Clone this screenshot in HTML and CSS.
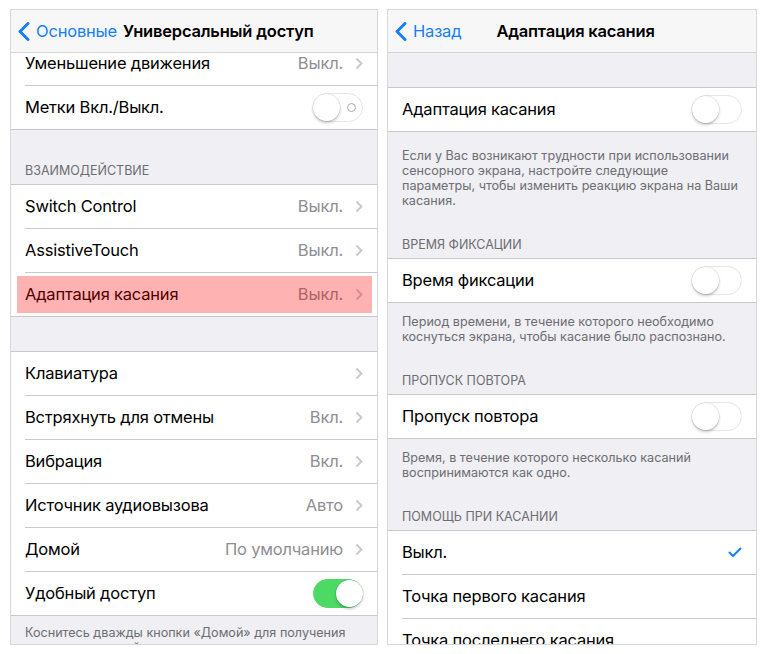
FILE: index.html
```html
<!DOCTYPE html>
<html lang="ru">
<head>
<meta charset="utf-8">
<title>Универсальный доступ</title>
<link rel="stylesheet" href="styles.css">
</head>
<body>
<div class="page">
  <section class="phone phone-left">
    <header class="nav nav-inline">
      <span class="back"><svg class="back-chev" viewBox="0 0 12 19"><path d="M10 1.5 L2 9.5 L10 17.5"/></svg>Основные</span>
      <span class="nav-title">Универсальный доступ</span>
    </header>
    <div class="screen">
      <div class="content scrolled">
        <div class="group">
          <div class="row"><div class="row-inner"><span class="label">Уменьшение движения</span><span class="value">Выкл.</span><svg class="chev" viewBox="0 0 8 13"><path d="M1.5 1.5 L6.5 6.5 L1.5 11.5"/></svg></div></div>
          <div class="row"><div class="row-inner"><span class="label">Метки Вкл./Выкл.</span><span class="toggle"><span class="knob"></span><span class="o-label"></span></span></div></div>
        </div>
        <div class="sec-header sec-header-tall">ВЗАИМОДЕЙСТВИЕ</div>
        <div class="group">
          <div class="row"><div class="row-inner"><span class="label">Switch Control</span><span class="value">Выкл.</span><svg class="chev" viewBox="0 0 8 13"><path d="M1.5 1.5 L6.5 6.5 L1.5 11.5"/></svg></div></div>
          <div class="row"><div class="row-inner"><span class="label">AssistiveTouch</span><span class="value">Выкл.</span><svg class="chev" viewBox="0 0 8 13"><path d="M1.5 1.5 L6.5 6.5 L1.5 11.5"/></svg></div></div>
          <div class="row highlight"><div class="row-inner"><span class="label">Адаптация касания</span><span class="value">Выкл.</span><svg class="chev" viewBox="0 0 8 13"><path d="M1.5 1.5 L6.5 6.5 L1.5 11.5"/></svg></div></div>
        </div>
        <div class="spacer"></div>
        <div class="group">
          <div class="row"><div class="row-inner"><span class="label">Клавиатура</span><svg class="chev" viewBox="0 0 8 13"><path d="M1.5 1.5 L6.5 6.5 L1.5 11.5"/></svg></div></div>
          <div class="row"><div class="row-inner"><span class="label">Встряхнуть для отмены</span><span class="value">Вкл.</span><svg class="chev" viewBox="0 0 8 13"><path d="M1.5 1.5 L6.5 6.5 L1.5 11.5"/></svg></div></div>
          <div class="row"><div class="row-inner"><span class="label">Вибрация</span><span class="value">Вкл.</span><svg class="chev" viewBox="0 0 8 13"><path d="M1.5 1.5 L6.5 6.5 L1.5 11.5"/></svg></div></div>
          <div class="row"><div class="row-inner"><span class="label">Источник аудиовызова</span><span class="value">Авто</span><svg class="chev" viewBox="0 0 8 13"><path d="M1.5 1.5 L6.5 6.5 L1.5 11.5"/></svg></div></div>
          <div class="row"><div class="row-inner"><span class="label">Домой</span><span class="value">По умолчанию</span><svg class="chev" viewBox="0 0 8 13"><path d="M1.5 1.5 L6.5 6.5 L1.5 11.5"/></svg></div></div>
          <div class="row"><div class="row-inner"><span class="label">Удобный доступ</span><span class="toggle on"><span class="knob"></span></span></div></div>
        </div>
        <p class="footer footer-left">Коснитесь дважды кнопки «Домой» для получения доступа к верхней части экрана.</p>
      </div>
    </div>
  </section>

  <section class="phone phone-right">
    <header class="nav nav-centered">
      <span class="back"><svg class="back-chev" viewBox="0 0 12 19"><path d="M10 1.5 L2 9.5 L10 17.5"/></svg>Назад</span>
      <span class="nav-title">Адаптация касания</span>
      <span></span>
    </header>
    <div class="screen">
      <div class="content">
        <div class="spacer"></div>
        <div class="group">
          <div class="row"><div class="row-inner"><span class="label">Адаптация касания</span><span class="toggle"><span class="knob"></span></span></div></div>
        </div>
        <p class="footer footer-first">Если у Вас возникают трудности при использовании сенсорного экрана, настройте следующие параметры, чтобы изменить реакцию экрана на Ваши касания.</p>
        <div class="sec-header">ВРЕМЯ ФИКСАЦИИ</div>
        <div class="group">
          <div class="row"><div class="row-inner"><span class="label">Время фиксации</span><span class="toggle"><span class="knob"></span></span></div></div>
        </div>
        <p class="footer">Период времени, в течение которого необходимо коснуться экрана, чтобы касание было распознано.</p>
        <div class="sec-header">ПРОПУСК ПОВТОРА</div>
        <div class="group">
          <div class="row"><div class="row-inner"><span class="label">Пропуск повтора</span><span class="toggle"><span class="knob"></span></span></div></div>
        </div>
        <p class="footer">Время, в течение которого несколько касаний воспринимаются как одно.</p>
        <div class="sec-header">ПОМОЩЬ ПРИ КАСАНИИ</div>
        <div class="group">
          <div class="row"><div class="row-inner"><span class="label">Выкл.</span><svg class="check" viewBox="0 0 14 11"><path d="M1.5 5.5 L5 9 L12.5 1.5"/></svg></div></div>
          <div class="row"><div class="row-inner"><span class="label">Точка первого касания</span></div></div>
          <div class="row"><div class="row-inner"><span class="label">Точка последнего касания</span></div></div>
        </div>
      </div>
    </div>
  </section>
</div>
</body>
</html>
```

FILE: styles.css
```css
* {
  box-sizing: border-box;
  margin: 0;
  padding: 0;
}

body {
  background: #ffffff;
  font-family: Inter, "Noto Sans", sans-serif;
  color: #000;
}

.page {
  display: flex;
  gap: 9px;
  padding: 9px 0 0 10px;
}

.phone {
  height: 636px;
  border: 1px solid #d7d7db;
  background: #efeff4;
  display: flex;
  flex-direction: column;
  overflow: hidden;
}

.phone-left {
  width: 368px;
}

.phone-right {
  width: 370px;
}

.nav {
  flex: none;
  height: 43px;
  background: #f7f7f8;
  border-bottom: 1px solid #d4d4d8;
  padding-left: 7px;
  font-size: 16.5px;
  letter-spacing: -0.2px;
}

.nav-inline {
  display: flex;
  align-items: center;
  gap: 6px;
}

.nav-centered {
  display: grid;
  grid-template-columns: 1fr auto 1fr;
  align-items: center;
}

.back {
  display: flex;
  align-items: center;
  color: #147efb;
  white-space: nowrap;
}

.back-chev {
  width: 12px;
  height: 19px;
  margin-right: 6px;
  fill: none;
  stroke: #147efb;
  stroke-width: 3;
  stroke-linecap: round;
  stroke-linejoin: round;
}

.nav-title {
  font-weight: 600;
  white-space: nowrap;
}

.screen {
  flex: 1;
  overflow: hidden;
}

.scrolled {
  margin-top: -12px;
}

.group {
  background: #fff;
  border-top: 1px solid #c8c7cc;
  border-bottom: 1px solid #c8c7cc;
}

.row {
  padding-left: 14px;
  font-size: 16.5px;
  letter-spacing: -0.2px;
}

.row-inner {
  height: 44px;
  border-bottom: 1px solid #c8c7cc;
  display: flex;
  align-items: center;
  padding-right: 14px;
}

.row:last-child .row-inner {
  height: 43px;
  border-bottom: 0;
}

.label {
  flex: 1;
  white-space: nowrap;
  margin-top: -1px;
}

.value {
  color: #8e8e93;
  margin-right: 12px;
  white-space: nowrap;
  margin-top: -1px;
}

.chev {
  width: 8px;
  height: 13px;
  fill: none;
  stroke: #c7c7cc;
  stroke-width: 1.8;
}

.check {
  width: 14px;
  height: 11px;
  fill: none;
  stroke: #147efb;
  stroke-width: 2;
  stroke-linecap: round;
  stroke-linejoin: round;
}

.highlight {
  position: relative;
}

.highlight::after {
  content: "";
  position: absolute;
  top: 3px;
  bottom: 3px;
  left: 6px;
  right: 5px;
  background: rgba(255, 0, 0, 0.3);
}

.toggle {
  flex: none;
  width: 50px;
  height: 29px;
  border-radius: 15px;
  border: 1.5px solid #e5e5ea;
  background: #fff;
  display: flex;
  align-items: center;
  justify-content: space-between;
}

.knob {
  width: 27px;
  height: 27px;
  border-radius: 50%;
  background: #fff;
  margin-left: -1px;
  box-shadow: 0 2px 3px rgba(0, 0, 0, 0.22), 0 0 0 0.5px rgba(0, 0, 0, 0.12);
}

.o-label {
  width: 9px;
  height: 9px;
  border-radius: 50%;
  border: 1px solid #a9a9ae;
  margin-right: 6px;
}

.toggle.on {
  background: #4cd964;
  border-color: #4cd964;
  justify-content: flex-end;
}

.toggle.on .knob {
  margin-left: 0;
  margin-right: -1px;
}

.spacer {
  height: 34px;
}

.sec-header {
  padding: 29px 15px 5px 14px;
  font-size: 12.5px;
  line-height: 16px;
  color: #6d6d72;
}

.sec-header-tall {
  padding-top: 33px;
}

.footer {
  padding: 11px 12px 0 14px;
  font-size: 12.6px;
  line-height: 15px;
  color: #6d6d72;
}

.footer-first {
  padding-top: 16px;
}

.footer-left {
  padding-top: 9px;
}
```
